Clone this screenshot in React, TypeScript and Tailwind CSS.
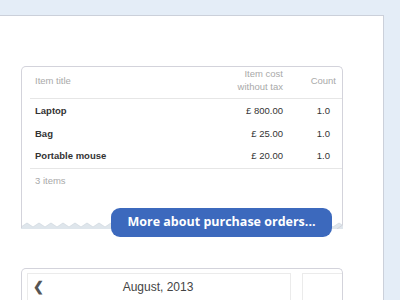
import React from 'react';

const items = [
  { title: 'Laptop', cost: '£ 800.00', count: '1.0' },
  { title: 'Bag', cost: '£ 25.00', count: '1.0' },
  { title: 'Portable mouse', cost: '£ 20.00', count: '1.0' },
];

const Zigzag: React.FC = () => (
  <svg className="block w-full h-[7px]" preserveAspectRatio="none" viewBox="0 0 322 7">
    <defs>
      <pattern id="zig" width="12" height="7" patternUnits="userSpaceOnUse">
        <path d="M0 7 L0 5 L6 1 L12 5 L12 7 Z" fill="#dfe6ec" />
        <path d="M0 5 L6 1 L12 5" fill="none" stroke="#d2d9e0" strokeWidth="0.8" />
      </pattern>
    </defs>
    <rect x="0" y="0" width="322" height="7" fill="url(#zig)" />
    <path d="M0.5 0 L0.5 6" stroke="#d3d3db" strokeWidth="1" />
    <path d="M321.5 0 L321.5 3 L316 7" fill="none" stroke="#d3d3db" strokeWidth="1" />
  </svg>
);

const App: React.FC = () => {
  return (
    <div className="w-[400px] h-[300px] overflow-hidden bg-[#e4edf7] pt-[15px] font-['Liberation_Sans',Arial,sans-serif]">
      <div className="w-[384px] h-[285px] bg-white border-t border-r border-[#cbd0da] pt-[50px] pl-[21px]">
        <div className="relative w-[322px]">
          <div className="rounded-t-[5px] border border-b-0 border-[#d3d3db] bg-white">
            <div className="flex items-start pl-[13px] pr-[6px] h-[31px] text-[9.5px] leading-[13px] text-[#a9a9a9]">
              <span className="flex-1 pt-[7px]">Item title</span>
              <span className="w-[80px] text-right">Item cost<br />without tax</span>
              <span className="w-[53px] text-right pt-[7px]">Count</span>
            </div>
            <div className="ml-[8px] border-t border-[#e6e6e6]" />
            <div className="pt-[1px]">
              {items.map((item) => (
                <div key={item.title} className="flex items-center pl-[13px] pr-[12px] h-[22.5px] text-[9.5px] text-[#333]">
                  <span className="flex-1 font-bold">{item.title}</span>
                  <span className="w-[80px] text-right">{item.cost}</span>
                  <span className="w-[47px] text-right">{item.count}</span>
                </div>
              ))}
            </div>
            <div className="ml-[8px] border-t border-[#e6e6e6]" />
            <div className="pl-[13px] pt-[5px] h-[53px] text-[9.5px] text-[#a9a9a9]">3 items</div>
          </div>
          <Zigzag />
          <div className="absolute left-[90px] top-[142px] w-[221px] h-[29px] rounded-[9px] bg-[#3c69bd] flex items-center justify-center text-white text-[12.5px] font-bold font-['Open_Sans',sans-serif]">
            More about purchase orders...
          </div>
        </div>

        <div className="mt-[39px] w-[322px] h-[40px] rounded-t-[5px] border border-b-0 border-[#d3d3db] overflow-hidden pt-[4px] pl-[5px] flex gap-[11px]">
          <div className="shrink-0 w-[264px] h-[40px] border border-[#ebebeb] flex items-start pt-[6px] pl-[5px]">
            <span className="text-[13px] leading-[14px] text-[#555] font-bold">❮</span>
            <span className="flex-1 text-center text-[12px] leading-[14px] text-[#444] pr-[18px]">August, 2013</span>
          </div>
          <div className="shrink-0 w-[60px] h-[40px] border border-[#ebebeb]" />
        </div>
      </div>
    </div>
  );
};

export default App;
